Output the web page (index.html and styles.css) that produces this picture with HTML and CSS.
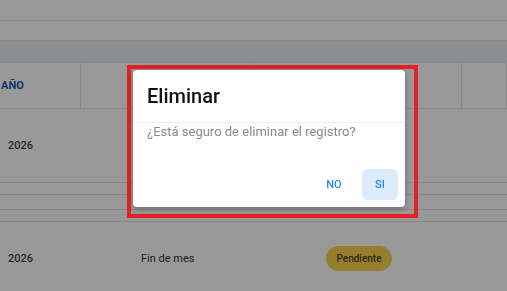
FILE: index.html
```html
<!DOCTYPE html>
<html lang="es">
<head>
    <meta charset="UTF-8">
    <meta name="viewport" content="width=device-width, initial-scale=1.0">
    <title>Registros</title>
    <link rel="stylesheet" href="styles.css">
</head>
<body>
    <div class="topbar"></div>
    <div class="subbar"></div>
    <div class="toolbar"></div>

    <div class="table">
        <div class="thead">
            <div class="th th-year">AÑO</div>
            <div class="th"></div>
            <div class="th"></div>
            <div class="th"></div>
        </div>
        <div class="row row-tall">
            <div class="cell cell-year">2026</div>
            <div class="cell"></div>
            <div class="cell"></div>
        </div>
        <div class="row row-thin"></div>
        <div class="row row-mid"></div>
        <div class="row row-thin"></div>
        <div class="row row-tall">
            <div class="cell cell-year">2026</div>
            <div class="cell">Fin de mes</div>
            <div class="cell"><span class="badge">Pendiente</span></div>
        </div>
    </div>

    <div class="backdrop"></div>

    <div class="highlight">
        <div class="dialog">
            <h2 class="dialog-title">Eliminar</h2>
            <p class="dialog-text">¿Está seguro de eliminar el registro?</p>
            <div class="dialog-actions">
                <button class="btn">NO</button>
                <button class="btn btn-active">SI</button>
            </div>
        </div>
    </div>
</body>
</html>
```

FILE: styles.css
```css
body {
    font-family: Roboto, "Liberation Sans", sans-serif;
    background: #ffffff;
    margin: 0;
    overflow: hidden;
}

.topbar {
    height: 20px;
    border-bottom: 1px solid #e6e6e6;
}

.subbar {
    height: 19px;
    border-bottom: 1px solid #e6e6e6;
}

.toolbar {
    height: 21px;
    background: #ebeef3;
    border-bottom: 1px solid #e2e4e8;
}

.thead {
    display: grid;
    grid-template-columns: 81px 174px 207px 1fr;
    height: 45px;
    border-bottom: 1px solid #e2e2e2;
}

.th {
    display: flex;
    align-items: center;
    border-right: 1px solid #e2e2e2;
    font-size: 11px;
    font-weight: 700;
    color: #1d5fb0;
}

.th-year {
    padding-left: 1px;
}

.row {
    display: grid;
    grid-template-columns: 141px 185px 1fr;
    align-items: center;
    border-bottom: 1px solid #e2e2e2;
    font-size: 11px;
    color: #333;
}

.row-tall {
    height: 73px;
}

.row-thin {
    height: 11px;
}

.row-mid {
    height: 14px;
}

.row:last-child {
    height: 72px;
    border-bottom: none;
}

.cell-year {
    padding-left: 8px;
    font-weight: 500;
    color: #3f3f3f;
}

.badge {
    display: inline-block;
    width: 66px;
    height: 25px;
    line-height: 25px;
    text-align: center;
    border-radius: 13px;
    background: #f8d44e;
    color: #4e4318;
    font-size: 10px;
    font-weight: 500;
}

.backdrop {
    position: fixed;
    inset: 0;
    background: rgba(0, 0, 0, 0.4);
}

.highlight {
    position: absolute;
    left: 127px;
    top: 65px;
    border: 4px solid #e42124;
    padding: 1px 9px 7px 2px;
}

.dialog {
    width: 272px;
    height: 137px;
    background: #fff;
    border-radius: 4px;
    box-shadow: 0 2px 6px rgba(0, 0, 0, 0.3);
    display: flex;
    flex-direction: column;
}

.dialog-title {
    margin: 0;
    padding: 12px 14px;
    font-size: 20px;
    line-height: 28px;
    font-weight: 500;
    color: #111;
    border-bottom: 1px solid #eeeeee;
}

.dialog-text {
    margin: 0;
    padding: 0 14px;
    font-size: 13px;
    line-height: 18px;
    color: #8a8a8a;
}

.dialog-actions {
    margin-top: auto;
    display: flex;
    justify-content: flex-end;
    gap: 10px;
    padding: 0 7px 7px;
}

.btn {
    width: 36px;
    height: 31px;
    border: none;
    border-radius: 6px;
    background: none;
    font-family: Roboto, "Liberation Sans", sans-serif;
    font-size: 11px;
    font-weight: 500;
    color: #2a88e2;
    padding: 0;
    cursor: pointer;
}

.btn-active {
    background: #dcebfa;
}
```
